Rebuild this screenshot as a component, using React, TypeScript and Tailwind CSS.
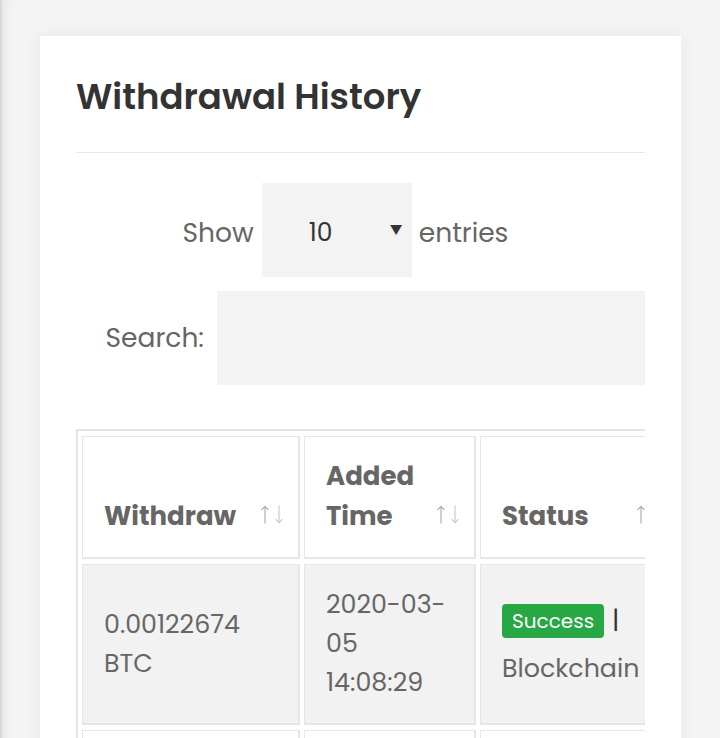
import React from "react";

const font = { fontFamily: '"Poppins", Inter, "DejaVu Sans", sans-serif' };

const SortIcon = () => (
  <svg
    className="absolute right-[15px] bottom-[33px]"
    width="22"
    height="19"
    viewBox="0 0 22 19"
    fill="none"
    strokeWidth="1.3"
    strokeLinecap="round"
    strokeLinejoin="round"
  >
    <g stroke="#b5b5b5">
      <path d="M4 18V1.5" />
      <path d="M1 4.5L4 1.5L7 4.5" />
    </g>
    <g stroke="#cfcfcf">
      <path d="M18 1V17.5" />
      <path d="M15 14.5L18 17.5L21 14.5" />
    </g>
  </svg>
);

const cell = "border border-r-2 border-b-2 border-[#e6e6e6]";

const App = () => {
  return (
    <div
      className="min-h-screen bg-[#f4f4f4] border-l-[2px] border-[#d9d9d9] shadow-[inset_10px_0_12px_-8px_rgba(0,0,0,0.08)] pl-[38px] pr-[39px] pt-[36px]"
      style={font}
    >
      <div className="bg-white px-[36px] pt-[40px] pb-10 shadow-[0_0_18px_rgba(0,0,0,0.06)]">
        <h2 className="text-[35.5px] leading-[1.2] font-semibold text-[#333] pb-[33px] border-b border-[#e8e8e8]">
          Withdrawal History
        </h2>

        {/* length select */}
        <div className="flex items-center justify-center pr-[30px] mt-[30px] text-[26.5px] text-[#666]">
          <span className="mt-[6px]">Show</span>
          <div className="relative ml-2 mr-[7px] h-[94px] w-[150px] bg-[#f3f3f3] flex items-center">
            <span className="pl-[47px] mt-[6px] text-[25px] text-[#333]">10</span>
            <span className="absolute right-[9px] top-[41px] text-[13px] leading-none text-[#333]">▼</span>
          </div>
          <span className="mt-[6px]">entries</span>
        </div>

        {/* search */}
        <div className="flex items-center justify-end mt-[14px] text-[26.5px] text-[#666]">
          <label className="mr-[13px]">Search:</label>
          <div className="h-[94px] w-[428px] bg-[#f3f3f3]" />
        </div>

        {/* table */}
        <div className="mt-[44px] overflow-hidden">
          <table className="table-fixed w-[606px] border-separate border-spacing-x-[4px] border-spacing-y-[5px] border-2 border-[#e3e3e3] text-[25.3px] text-[#666]">
            <thead>
              <tr className="text-[26px]">
                <th className={`relative w-[218px] h-[123px] align-bottom text-left font-bold leading-[40px] px-[21px] pb-[21px] ${cell}`}>
                  Withdraw
                  <SortIcon />
                </th>
                <th className={`relative w-[172px] align-bottom text-left font-bold leading-[40px] px-[21px] pb-[21px] ${cell}`}>
                  Added
                  <br />
                  Time
                  <SortIcon />
                </th>
                <th className={`relative w-[196px] align-bottom text-left font-bold leading-[40px] px-[21px] pb-[21px] ${cell}`}>
                  Status
                  <SortIcon />
                </th>
              </tr>
            </thead>
            <tbody>
              <tr className="bg-[#f2f2f2]">
                <td className={`h-[161px] align-middle leading-[39px] px-[21px] ${cell}`}>
                  0.00122674
                  <br />
                  BTC
                </td>
                <td className={`align-middle leading-[39px] px-[21px] ${cell}`}>
                  2020-03-
                  <br />
                  05
                  <br />
                  14:08:29
                </td>
                <td className={`align-middle leading-[49px] pl-[21px] pr-0 ${cell}`}>
                  <span className="inline-block bg-[#28a745] text-white text-[20px] leading-[34px] px-[10px] rounded-[4px] align-middle">
                    Success
                  </span>
                  <span className="ml-2 text-[#333]">|</span>
                  <br />
                  <span className="whitespace-nowrap">Blockchain Confirmed</span>
                </td>
              </tr>
              <tr className="bg-white">
                <td className={`h-[161px] align-middle leading-[39px] px-[21px] ${cell}`}>
                  0.00245100
                  <br />
                  BTC
                </td>
                <td className={`align-middle leading-[39px] px-[21px] ${cell}`}>
                  2020-02-
                  <br />
                  21
                  <br />
                  09:12:44
                </td>
                <td className={`align-middle leading-[49px] pl-[21px] ${cell}`}>
                  <span className="inline-block bg-[#28a745] text-white text-[20px] leading-[34px] px-[10px] rounded-[4px] align-middle">
                    Success
                  </span>
                  <span className="ml-2 text-[#333]">|</span>
                </td>
              </tr>
            </tbody>
          </table>
        </div>
      </div>
    </div>
  );
};

export default App;
